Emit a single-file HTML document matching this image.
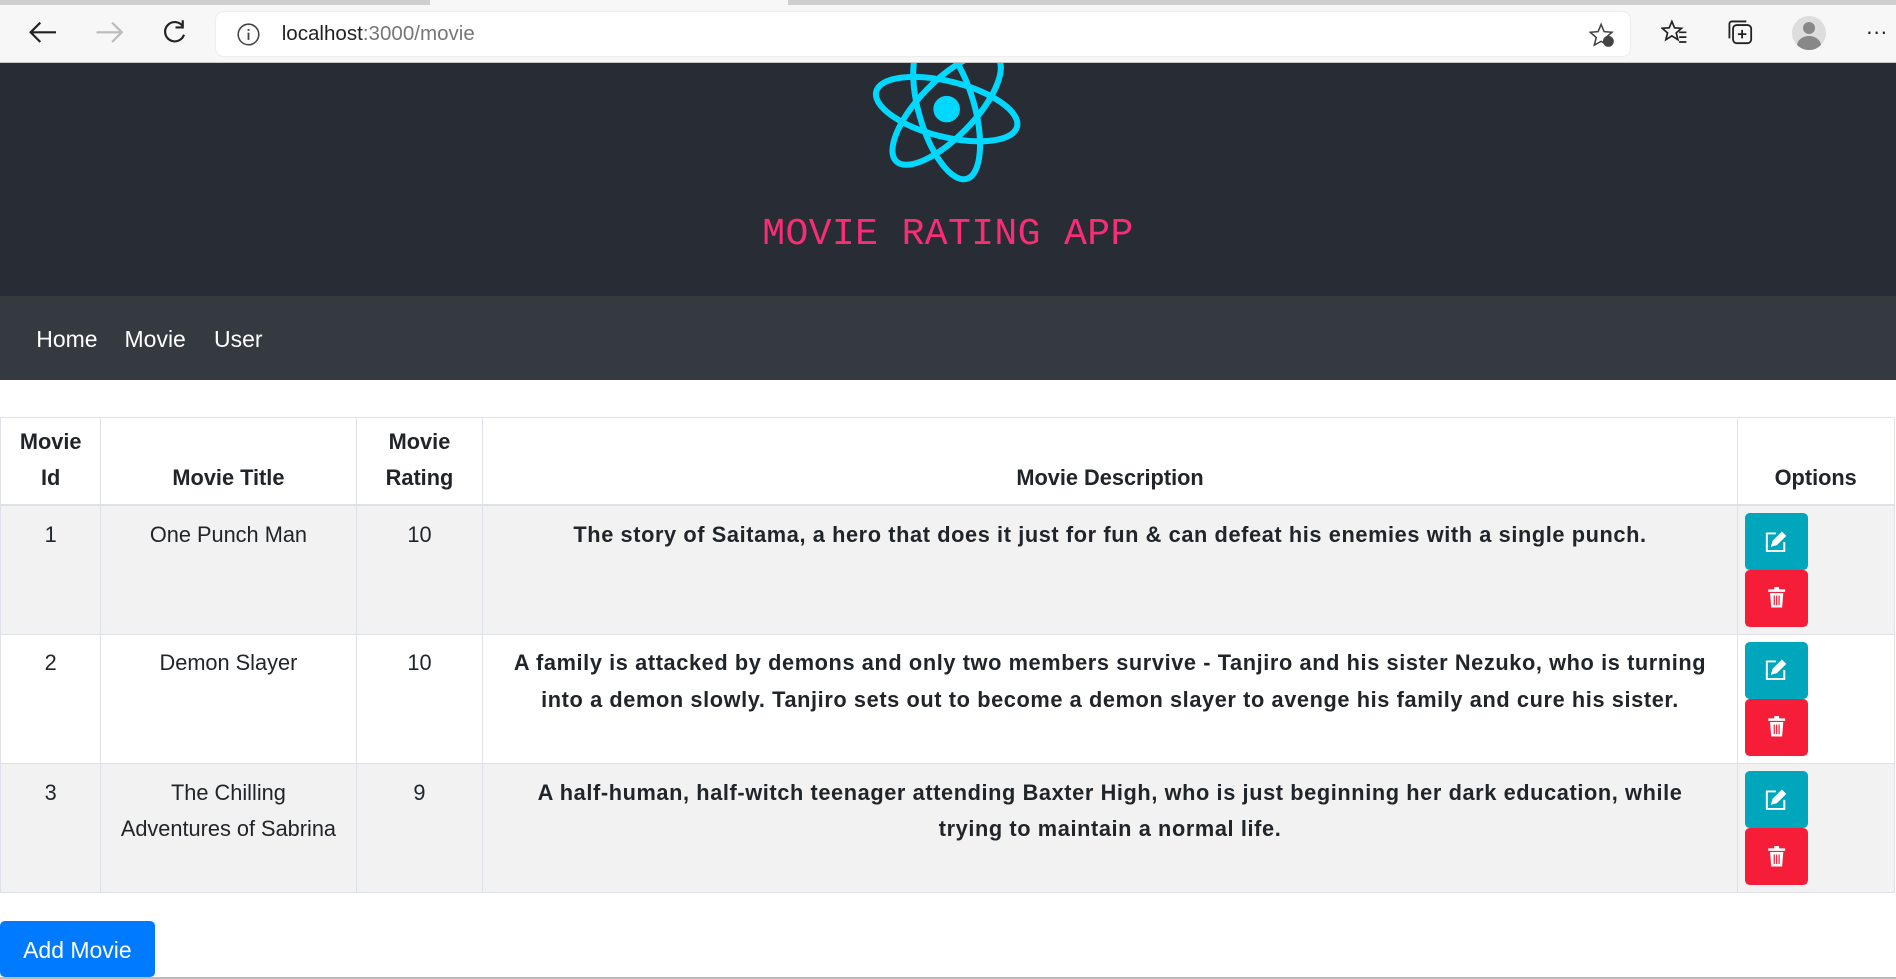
<!DOCTYPE html>
<html><head><meta charset="utf-8"><style>
html,body{margin:0;padding:0;overflow:hidden;background:#fff}
#w{zoom:1.2092;width:1568px;height:810px;position:relative;font-family:"Liberation Sans",sans-serif;overflow:hidden}
.chrome{position:absolute;left:0;top:0;width:1568px;height:52px;background:#f7f7f7;border-bottom:1px solid #c8c8c8;box-sizing:border-box}
.tabs{position:absolute;top:0;left:0;width:1568px;height:4px;background:#cfcfcf}
.tabs i{position:absolute;left:356px;width:296px;top:0;height:4px;background:#f7f7f7}
.addr{position:absolute;left:179px;top:10px;width:1169px;height:36px;background:#fff;border-radius:6px;box-shadow:0 0 1px #ccc}
.addr span{position:absolute;left:54px;top:8px;font-size:17px;color:#222}
.addr span b{font-weight:normal;color:#777}
.hdr{position:absolute;top:52px;left:0;width:1568px;height:193px;background:#282c34;overflow:hidden}
.title{position:absolute;top:176px;width:1568px;text-align:center;font-family:"Liberation Mono",monospace;font-size:31.5px;letter-spacing:0.3px;color:#f72d76}
.nav{position:absolute;top:245px;left:0;width:1568px;height:69px;background:#343a40}
.nav span{position:absolute;top:25px;color:#fff;font-size:19px}
table{position:absolute;top:345px;left:0;width:1567px;border-collapse:collapse;font-size:18px;color:#212529}
td,th{border:1px solid #dee2e6;text-align:center;padding:0}
th{height:72px;vertical-align:bottom;padding-bottom:6px;box-sizing:border-box;line-height:30px;border-bottom:2px solid #dee2e6}
td{vertical-align:top;padding-top:9px;line-height:30px;height:107px;box-sizing:border-box}
tr.s td{background:#f2f2f2}
td.d{font-weight:bold;padding-left:4px;padding-right:4px;letter-spacing:0.5px;white-space:nowrap}
td.o{padding-top:6px;text-align:left;padding-left:6px}
.b{width:52px;height:47px;border-radius:4px;display:flex;align-items:center;justify-content:center}
.e{background:#00a6bb}.r{background:#f51d38}
.add{position:absolute;left:0;top:762px;width:128px;height:46px;background:#007bff;border-radius:4px;color:#fff;font-size:19px;text-align:center;line-height:48px}
</style></head><body><div id="w">
<div class="chrome"><div class="tabs"><i></i></div>
<svg style="position:absolute;left:22px;top:16px" width="26" height="22" viewBox="0 0 26 22"><path d="M24 11H3M11 3L3 11l8 8" stroke="#222" stroke-width="1.8" fill="none"/></svg>
<svg style="position:absolute;left:78px;top:16px" width="26" height="22" viewBox="0 0 26 22"><path d="M2 11h21M15 3l8 8-8 8" stroke="#bbb" stroke-width="1.8" fill="none"/></svg>
<svg style="position:absolute;left:133px;top:16px" width="22" height="22" viewBox="0 0 22 22"><path d="M18 6A8 8 0 1 0 19 13M18 1v6h-6" stroke="#222" stroke-width="1.8" fill="none"/></svg>
<div class="addr"><svg style="position:absolute;left:17px;top:9px" width="19" height="19"><circle cx="9.5" cy="9.5" r="8.5" stroke="#444" stroke-width="1.3" fill="none"/><path d="M9.5 8v6M9.5 5v1.5" stroke="#444" stroke-width="1.5"/></svg><span>localhost<b>:3000/movie</b></span>
<svg style="position:absolute;left:1135px;top:8px" width="22" height="22"><path d="M10 2l2.5 6 6.5.5-5 4.3 1.6 6.3L10 16l-5.6 3.1L6 12.8 1 8.5 7.5 8z" stroke="#444" stroke-width="1.3" fill="none"/><circle cx="16" cy="16" r="4.5" fill="#444"/></svg></div>
<svg style="position:absolute;left:1374px;top:16px" width="22" height="22"><path d="M9 2l2.2 5.3 5.8.4-4.4 3.8 1.4 5.6L9 14l-5 3.1 1.4-5.6L1 7.7l5.8-.4z" stroke="#222" stroke-width="1.4" fill="none"/><path d="M15 11h6M15 15h6M15 19h6" stroke="#222" stroke-width="1.4"/></svg>
<svg style="position:absolute;left:1428px;top:16px" width="22" height="22"><rect x="5" y="5" width="15" height="15" rx="3" stroke="#222" stroke-width="1.5" fill="none"/><path d="M2 16V4a2 2 0 0 1 2-2h12M12.5 9v7M9 12.5h7" stroke="#222" stroke-width="1.5" fill="none"/></svg>
<div style="position:absolute;left:1482px;top:13px;width:28px;height:28px;border-radius:50%;background:#ddd;overflow:hidden"><div style="position:absolute;left:9px;top:5px;width:10px;height:10px;border-radius:50%;background:#888"></div><div style="position:absolute;left:4px;top:17px;width:20px;height:16px;border-radius:50%;background:#888"></div></div>
<div style="position:absolute;left:1543px;top:16px;font-size:18px;color:#222">···</div>
</div>
<div class="hdr">
<svg style="position:absolute;left:713px;top:-20px" width="140" height="130" viewBox="0 0 140 130"><g transform="translate(70,58) rotate(14)" fill="none" stroke="#00d8ff" stroke-width="5"><ellipse rx="60" ry="23"/><ellipse rx="60" ry="23" transform="rotate(60)"/><ellipse rx="60" ry="23" transform="rotate(120)"/></g><circle cx="70" cy="58" r="11" fill="#00d8ff"/></svg>
</div>
<div class="title">MOVIE RATING APP</div>
<div class="nav"><span style="left:30px">Home</span><span style="left:103px">Movie</span><span style="left:177px">User</span></div>
<table>
<tr><th style="width:83px">Movie<br>Id</th><th style="width:211px">Movie Title</th><th style="width:105px">Movie<br>Rating</th><th>Movie Description</th><th style="width:130px">Options</th></tr>
<tr class="s"><td>1</td><td>One Punch Man</td><td>10</td><td class="d">The story of Saitama, a hero that does it just for fun &amp; can defeat his enemies with a single punch.</td><td class="o"><div class="b e"><svg width="18" height="18" viewBox="0 0 18 18" fill="none" stroke="#fff" stroke-width="1.6"><path d="M9 2H1.5v14.5H16V9"/><path d="M6 12l1-3.5 7-7 2.5 2.5-7 7z" fill="#fff"/></svg></div><div class="b r"><svg width="16" height="18" viewBox="0 0 16 18"><path d="M1 3h14M6 1h4" stroke="#fff" stroke-width="2"/><path d="M2.5 5h11l-1 12h-9z" fill="#fff"/><path d="M6 7v8M8 7v8M10 7v8" stroke="#f51d38" stroke-width="1"/></svg></div></td></tr>
<tr><td>2</td><td>Demon Slayer</td><td>10</td><td class="d">A family is attacked by demons and only two members survive - Tanjiro and his sister Nezuko, who is turning<br>into a demon slowly. Tanjiro sets out to become a demon slayer to avenge his family and cure his sister.</td><td class="o"><div class="b e"><svg width="18" height="18" viewBox="0 0 18 18" fill="none" stroke="#fff" stroke-width="1.6"><path d="M9 2H1.5v14.5H16V9"/><path d="M6 12l1-3.5 7-7 2.5 2.5-7 7z" fill="#fff"/></svg></div><div class="b r"><svg width="16" height="18" viewBox="0 0 16 18"><path d="M1 3h14M6 1h4" stroke="#fff" stroke-width="2"/><path d="M2.5 5h11l-1 12h-9z" fill="#fff"/><path d="M6 7v8M8 7v8M10 7v8" stroke="#f51d38" stroke-width="1"/></svg></div></td></tr>
<tr class="s"><td>3</td><td>The Chilling<br>Adventures of Sabrina</td><td>9</td><td class="d">A half-human, half-witch teenager attending Baxter High, who is just beginning her dark education, while<br>trying to maintain a normal life.</td><td class="o"><div class="b e"><svg width="18" height="18" viewBox="0 0 18 18" fill="none" stroke="#fff" stroke-width="1.6"><path d="M9 2H1.5v14.5H16V9"/><path d="M6 12l1-3.5 7-7 2.5 2.5-7 7z" fill="#fff"/></svg></div><div class="b r"><svg width="16" height="18" viewBox="0 0 16 18"><path d="M1 3h14M6 1h4" stroke="#fff" stroke-width="2"/><path d="M2.5 5h11l-1 12h-9z" fill="#fff"/><path d="M6 7v8M8 7v8M10 7v8" stroke="#f51d38" stroke-width="1"/></svg></div></td></tr>
</table>
<div class="add">Add Movie</div>
<div style="position:absolute;left:0;top:808px;width:1568px;height:2px;background:#bbb"></div>
</div></body></html>
